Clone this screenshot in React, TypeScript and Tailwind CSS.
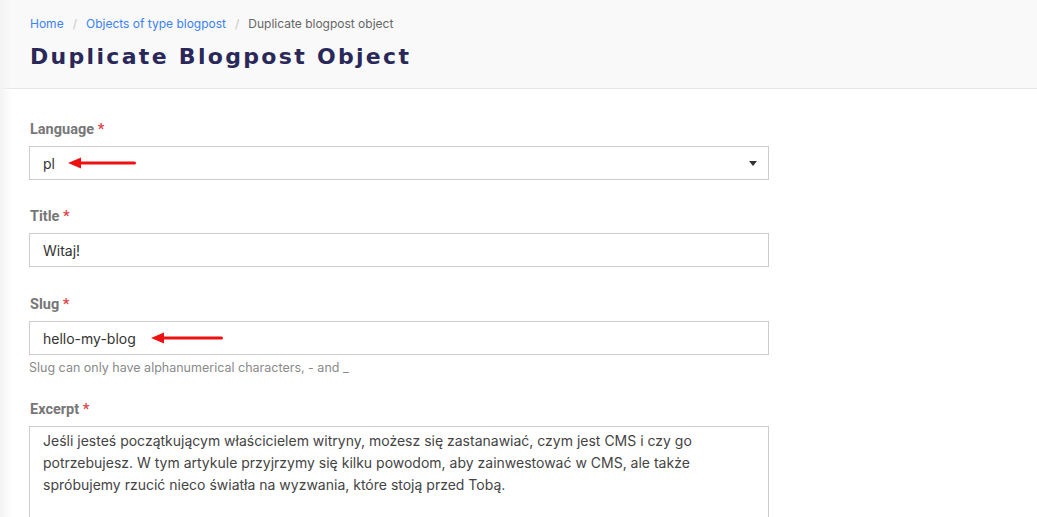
import React from "react";

const inputCls =
  "block w-[740px] h-[34px] border border-[#cccccc] bg-white px-[13px] text-[14px] text-[#333333] font-['Inter',sans-serif] outline-none";

function Arrow({ width }: { width: number }) {
  return (
    <svg width={width} height="12" viewBox={`0 0 ${width} 12`} className="block">
      <polygon points={`0,6 13,0.5 13,11.5`} fill="#ee1111" />
      <line x1="10" y1="6" x2={width - 1.5} y2="6" stroke="#ee1111" strokeWidth="3" strokeLinecap="round" />
    </svg>
  );
}

function Label({ text }: { text: string }) {
  return (
    <div className="mb-[6px] pl-px text-[14.5px] leading-[20px] font-bold text-[#777777] font-['Roboto',sans-serif]">
      {text} <span className="text-[#e04848]">*</span>
    </div>
  );
}

export default function App() {
  return (
    <div className="relative h-[517px] overflow-hidden bg-white font-['Inter',sans-serif]">
      <div className="absolute left-0 top-0 h-full w-[12px] bg-gradient-to-r from-[#f3f3f3] to-transparent" />

      {/* header */}
      <div className="h-[89px] border-b border-[#e6e6e6] bg-[#f9f9f9] pl-[30px] pt-[16px]">
        <div className="flex items-center text-[12px] leading-[16px]">
          <span className="text-[#3b82f6]">Home</span>
          <span className="mx-[9px] text-[#c8c8c8]">/</span>
          <span className="text-[#3b82f6]">Objects of type blogpost</span>
          <span className="mx-[9px] text-[#c8c8c8]">/</span>
          <span className="text-[#666666]">Duplicate blogpost object</span>
        </div>
        <h1 className="mt-[10px] text-[22px] leading-[30px] font-bold tracking-[0.105em] text-[#2a2859] font-['DejaVu_Sans',sans-serif]">
          Duplicate Blogpost Object
        </h1>
      </div>

      {/* form */}
      <div className="pl-[29px] pt-[31px]">
        <div className="mb-[27px]">
          <Label text="Language" />
          <div className="relative flex w-[740px] h-[34px] items-center border border-[#cccccc] bg-white px-[13px] text-[14px] text-[#333333]">
            <span>pl</span>
            <div className="absolute left-[38px] top-[10px]">
              <Arrow width={68} />
            </div>
            <svg width="8" height="5" viewBox="0 0 8 5" className="absolute right-[11px] top-[14px]">
              <polygon points="0,0 8,0 4,5" fill="#333333" />
            </svg>
          </div>
        </div>

        <div className="mb-[28px]">
          <Label text="Title" />
          <input className={inputCls} defaultValue="Witaj!" />
        </div>

        <div className="mb-[24px]">
          <Label text="Slug" />
          <div className="relative">
            <input className={inputCls} defaultValue="hello-my-blog" />
            <div className="absolute left-[122px] top-[11px]">
              <Arrow width={72} />
            </div>
          </div>
          <div className="mt-[5px] text-[12.5px] leading-[16px] text-[#8a8a8a]">
            Slug can only have alphanumerical characters, - and _
          </div>
        </div>

        <div>
          <Label text="Excerpt" />
          <textarea
            className="block w-[740px] h-[120px] resize-none border border-[#cccccc] bg-white px-[13px] pt-[3px] text-[14px] leading-[22px] text-[#444444] font-['Inter',sans-serif] outline-none"
            defaultValue="Jeśli jesteś początkującym właścicielem witryny, możesz się zastanawiać, czym jest CMS i czy go potrzebujesz. W tym artykule przyjrzymy się kilku powodom, aby zainwestować w CMS, ale także spróbujemy rzucić nieco światła na wyzwania, które stoją przed Tobą."
          />
        </div>
      </div>
    </div>
  );
}
